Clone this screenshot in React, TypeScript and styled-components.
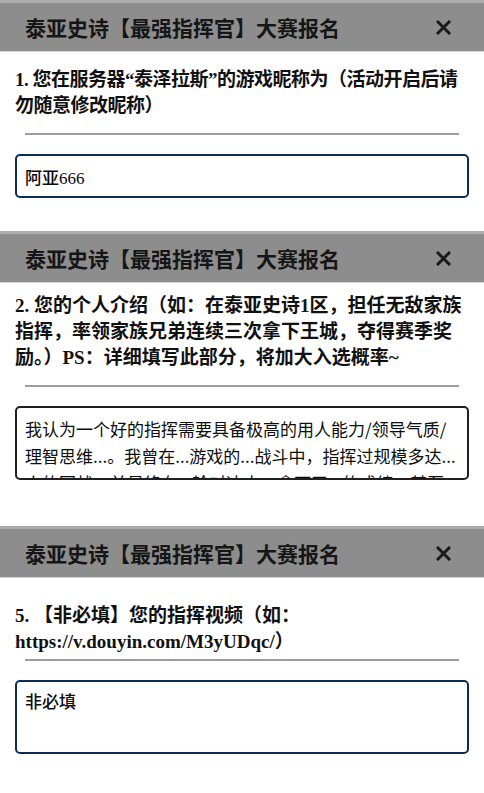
import styled, { createGlobalStyle } from "styled-components";

const GlobalStyle = createGlobalStyle`
    html, body {
        margin: 0;
        padding: 0;
        background: #ffffff;
    }
    * {
        box-sizing: border-box;
    }
`;

const Page = styled.div`
    width: 484px;
    display: flex;
    flex-direction: column;
`;

const Section = styled.section<{ $tail: number }>`
    display: flex;
    flex-direction: column;
    padding-bottom: ${(p) => p.$tail}px;
`;

const Header = styled.div`
    height: 52px;
    border-top: 3px solid #adadad;
    border-bottom: 1px solid #d4d4d4;
    background: #8d8d8d;
    display: flex;
    align-items: center;
    justify-content: space-between;
    padding: 0 33px 0 25px;
`;

const Title = styled.h2`
    margin: 0;
    font-family: "Noto Sans CJK SC", sans-serif;
    font-size: 21px;
    font-weight: 700;
    color: #161616;
`;

const Close = styled.button`
    border: 0;
    padding: 0;
    background: none;
    width: 16px;
    height: 16px;
    display: flex;
    align-items: center;
    justify-content: center;
    cursor: pointer;
    svg {
        width: 15px;
        height: 15px;
    }
`;

const Question = styled.p<{ $top: number; $gap: number; $track?: number }>`
    margin: ${(p) => p.$top}px 0 ${(p) => p.$gap}px;
    padding: 0 14px 0 15px;
    font-family: "Liberation Serif", "Noto Sans CJK SC", serif;
    font-size: 19px;
    font-weight: 700;
    line-height: 26px;
    letter-spacing: ${(p) => p.$track ?? 0}px;
    color: #111111;
`;

const Divider = styled.hr`
    margin: 0 25px;
    height: 2px;
    border: 0;
    background: #9c9c9c;
`;

const Input = styled.input`
    margin: 19px 15px 0;
    height: 44px;
    padding: 0 8px;
    border: 2px solid #0c2c56;
    border-radius: 5px;
    background: #ffffff;
    font-family: "Liberation Serif", "Noto Sans CJK SC", serif;
    font-size: 17px;
    font-weight: 500;
    color: #0a0a0a;
    outline: none;
`;

const TextBox = styled.textarea<{ $focused?: boolean }>`
    margin: 19px 15px 0;
    height: 74px;
    padding: ${(p) => (p.$focused ? "5px 8px" : "7px 8px")};
    border: ${(p) => (p.$focused ? "2px solid #0c2c56" : "2px solid #1f1f1f")};
    border-radius: 5px;
    background: #ffffff;
    font-family: "Noto Sans CJK SC", sans-serif;
    font-size: 17px;
    font-weight: ${(p) => (p.$focused ? 500 : 400)};
    line-height: 27px;
    color: #0d0d0d;
    resize: none;
    overflow: hidden;
    outline: none;
`;

const CloseIcon = () => (
    <svg viewBox="0 0 15 15" xmlns="http://www.w3.org/2000/svg" aria-hidden="true">
        <path d="M2 2L13 13M13 2L2 13" stroke="#1a1a1a" strokeWidth="3" strokeLinecap="square" />
    </svg>
);

const TITLE = "泰亚史诗【最强指挥官】大赛报名";

const INTRO =
    "我认为一个好的指挥需要具备极高的用人能力/领导气质/理智思维...。我曾在...游戏的...战斗中，指挥过规模多达...人的团战，并最终在...轮对决中，拿下了...的成绩，甚至...";

function FormHeader() {
    return (
        <Header>
            <Title>{TITLE}</Title>
            <Close type="button">
                <CloseIcon />
            </Close>
        </Header>
    );
}

export default function App() {
    return (
        <Page>
            <GlobalStyle />
            <Section $tail={33}>
                <FormHeader />
                <Question $top={15} $gap={14} $track={-0.5}>
                    1. 您在服务器“泰泽拉斯”的游戏昵称为（活动开启后请勿随意修改昵称）
                </Question>
                <Divider />
                <Input defaultValue="阿亚666" />
            </Section>
            <Section $tail={46}>
                <FormHeader />
                <Question $top={10} $gap={14}>
                    2. 您的个人介绍（如：在泰亚史诗1区，担任无敌家族指挥，率领家族兄弟连续三次拿下王城，夺得赛季奖励。）PS：详细填写此部分，将加大入选概率~
                </Question>
                <Divider />
                <TextBox defaultValue={INTRO} />
            </Section>
            <Section $tail={40}>
                <FormHeader />
                <Question $top={25} $gap={4}>
                    5. 【非必填】您的指挥视频（如：https://v.douyin.com/M3yUDqc/）
                </Question>
                <Divider />
                <TextBox $focused defaultValue="非必填" />
            </Section>
        </Page>
    );
}
